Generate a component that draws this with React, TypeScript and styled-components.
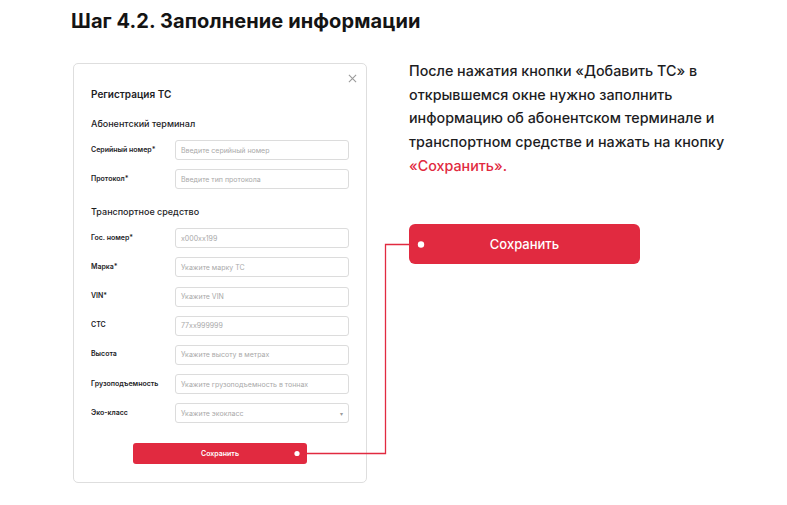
import React from 'react';
import styled, { createGlobalStyle } from 'styled-components';

const RED = '#e12a40';

const terminalFields = [
  { label: 'Серийный номер*', placeholder: 'Введите серийный номер' },
  { label: 'Протокол*', placeholder: 'Введите тип протокола' },
];

const vehicleFields = [
  { label: 'Гос. номер*', placeholder: 'x000xx199' },
  { label: 'Марка*', placeholder: 'Укажите марку ТС' },
  { label: 'VIN*', placeholder: 'Укажите VIN' },
  { label: 'СТС', placeholder: '77xx999999' },
  { label: 'Высота', placeholder: 'Укажите высоту в метрах' },
  { label: 'Грузоподъемность', placeholder: 'Укажите грузоподъемность в тоннах' },
];

const App: React.FC = () => {
  return (
    <Page>
      <GlobalStyle />
      <Title>Шаг 4.2. Заполнение информации</Title>
      <Content>
        <Card>
          <CloseRow>
            <CloseIcon viewBox="0 0 10 10">
              <path d="M1 1L9 9M9 1L1 9" stroke="#9a9a9a" strokeWidth="1.2" />
            </CloseIcon>
          </CloseRow>
          <CardTitle>Регистрация ТС</CardTitle>
          <SectionTitle>Абонентский терминал</SectionTitle>
          <Fields>
            {terminalFields.map((f) => (
              <FieldRow key={f.label}>
                <Label>{f.label}</Label>
                <Input>{f.placeholder}</Input>
              </FieldRow>
            ))}
          </Fields>
          <SectionTitle>Транспортное средство</SectionTitle>
          <Fields>
            {vehicleFields.map((f) => (
              <FieldRow key={f.label}>
                <Label>{f.label}</Label>
                <Input>{f.placeholder}</Input>
              </FieldRow>
            ))}
            <FieldRow>
              <Label>Эко-класс</Label>
              <Input>
                Укажите экокласс
                <Caret>▾</Caret>
              </Input>
            </FieldRow>
          </Fields>
          <SmallButton>Сохранить</SmallButton>
        </Card>
        <Side>
          <Text>
            После нажатия кнопки «Добавить ТС» в<br />
            открывшемся окне нужно заполнить<br />
            информацию об абонентском терминале и<br />
            транспортном средстве и нажать на кнопку<br />
            <Accent>«Сохранить».</Accent>
          </Text>
          <BigButton>Сохранить</BigButton>
        </Side>
      </Content>
      <Connector width="787" height="505" viewBox="0 0 787 505">
        <polyline
          points="297,453.5 385.5,453.5 385.5,244.5 421,244.5"
          fill="none"
          stroke={RED}
          strokeWidth="1.3"
        />
        <circle cx="297" cy="453.5" r="2.6" fill="#fff" />
        <circle cx="421" cy="244.5" r="3.2" fill="#fff" />
      </Connector>
    </Page>
  );
};

export default App;

const GlobalStyle = createGlobalStyle`
  html, body {
    margin: 0;
    padding: 0;
    background: #ffffff;
  }
  body {
    font-family: Inter, "Noto Sans", sans-serif;
    color: #1d1d1f;
  }
`;

const Page = styled.div`
  position: relative;
  width: 787px;
  height: 505px;
  padding: 8px 0 0 71px;
  box-sizing: border-box;
`;

const Title = styled.h1`
  margin: 0;
  font-size: 20px;
  line-height: 26px;
  font-weight: 700;
  letter-spacing: 0.1px;
  color: #141414;
`;

const Content = styled.div`
  display: flex;
  align-items: flex-start;
  margin-top: 29px;
  padding-left: 2px;
`;

const Card = styled.div`
  width: 294px;
  height: 420px;
  box-sizing: border-box;
  border: 1px solid #dedede;
  border-radius: 5px;
  padding: 10px 8px 0 17px;
  display: flex;
  flex-direction: column;
`;

const CloseRow = styled.div`
  display: flex;
  justify-content: flex-end;
  height: 10px;
  padding-right: 1px;
`;

const CloseIcon = styled.svg`
  width: 9px;
  height: 9px;
`;

const CardTitle = styled.div`
  margin-top: 3px;
  font-size: 10px;
  line-height: 14px;
  font-weight: 600;
  color: #1d1d1f;
`;

const SectionTitle = styled.div`
  margin-top: 17px;
  font-size: 9px;
  line-height: 12px;
  font-weight: 500;
  color: #1d1d1f;
`;

const Fields = styled.div`
  display: flex;
  flex-direction: column;
  gap: 9.2px;
  margin-top: 10px;
  padding-right: 9px;
`;

const FieldRow = styled.div`
  display: flex;
  align-items: center;
`;

const Label = styled.div`
  width: 84px;
  font-size: 7px;
  font-weight: 600;
  color: #1d1d1f;
  margin-top: -2px;
  white-space: nowrap;
`;

const Input = styled.div`
  position: relative;
  flex: 1;
  height: 20px;
  box-sizing: border-box;
  border: 1px solid #dcdcdc;
  border-radius: 3px;
  padding-left: 5px;
  display: flex;
  align-items: center;
  font-size: 7px;
  color: #a9a9a9;
  white-space: nowrap;
`;

const Caret = styled.span`
  margin-left: auto;
  margin-right: 5px;
  font-size: 6px;
  color: #9a9a9a;
`;

const SmallButton = styled.div`
  align-self: flex-start;
  margin: 20px 0 0 42px;
  width: 174px;
  height: 21px;
  border-radius: 3px;
  background: ${RED};
  color: #fff;
  font-size: 7px;
  font-weight: 600;
  display: flex;
  align-items: center;
  justify-content: center;
`;

const Side = styled.div`
  margin-left: 42px;
  width: 340px;
  display: flex;
  flex-direction: column;
`;

const Text = styled.p`
  margin: -4px 0 0 0;
  font-size: 14.3px;
  line-height: 23.7px;
  font-weight: 500;
  color: #1d1d1f;
  white-space: nowrap;
`;

const Accent = styled.span`
  color: ${RED};
`;

const BigButton = styled.div`
  margin-top: 46px;
  width: 231px;
  height: 40px;
  border-radius: 6px;
  background: ${RED};
  color: #fff;
  font-size: 13px;
  font-weight: 500;
  display: flex;
  align-items: center;
  justify-content: center;
`;

const Connector = styled.svg`
  position: absolute;
  left: 0;
  top: 0;
  pointer-events: none;
`;
